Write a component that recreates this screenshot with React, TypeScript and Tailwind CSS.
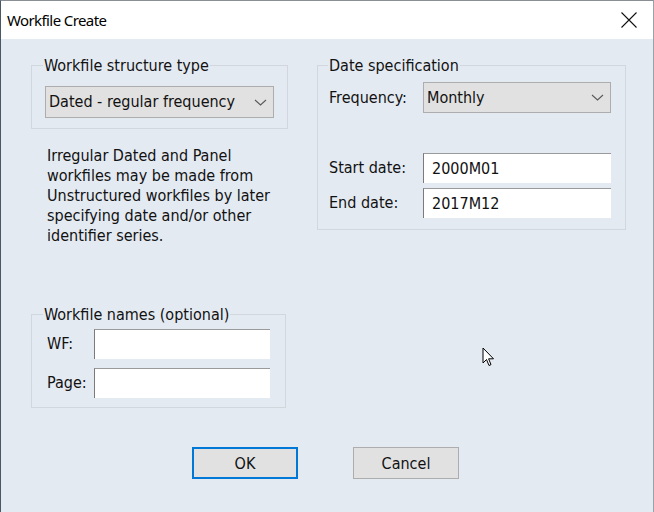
import React from 'react';

const Chevron = () => (
  <svg width="13" height="7" viewBox="0 0 13 7" fill="none">
    <path d="M1 1 L6.5 6 L12 1" stroke="#5a5a5a" strokeWidth="1.1" />
  </svg>
);

const Dropdown = ({ value, className }: { value: string; className: string }) => (
  <div className={`flex items-center justify-between border border-[#adadad] bg-[#e1e1e1] pl-[3px] pr-[6px] ${className}`}>
    <span>{value}</span>
    <Chevron />
  </div>
);

const Field = ({ value, className }: { value?: string; className: string }) => (
  <div className={`flex items-center bg-white border-t border-l border-t-[#9a9a9a] border-l-[#7a7a7a] pl-[8px] ${className}`}>
    {value}
  </div>
);

export default function App() {
  return (
    <div className="relative w-[654px] h-[512px] bg-[#e4eaf2] border-l border-t border-r border-l-[#4c5764] border-t-[#8a8f96] border-r-[#9aa1a9] text-[#111] font-['DejaVu_Sans_Condensed','DejaVu_Sans',sans-serif] text-[16px] leading-[18px]">
      {/* title bar */}
      <div className="h-[38px] bg-white flex items-center justify-between pl-[6px] pr-[16px]">
        <span className="font-['Noto_Sans',sans-serif] text-[15px] tracking-[-0.6px] text-black">Workfile Create</span>
        <svg width="16" height="16" viewBox="0 0 16 16">
          <path d="M0.5 0.5 L15.5 15.5 M15.5 0.5 L0.5 15.5" stroke="#111" strokeWidth="1.1" />
        </svg>
      </div>

      <div className="flex items-start mt-[17px]">
        {/* left column */}
        <div className="ml-[30px] w-[255px] flex flex-col">
          <fieldset className="border border-[#d2d7dd] px-[13px] pt-[12px] pb-[10px]">
            <legend className="-ml-[2px] px-[1px] relative top-[1px]">Workfile structure type</legend>
            <Dropdown value="Dated - regular frequency" className="h-[32px] w-[229px]" />
          </fieldset>

          <p className="mt-[17px] pl-[16px] leading-[20px]">
            Irregular Dated and Panel<br />
            workfiles may be made from<br />
            Unstructured workfiles by later<br />
            specifying date and/or other<br />
            identifier series.
          </p>

          <fieldset className="mt-[59px] border border-[#d2d7dd] pl-[15px] pr-[15px] pt-[6px] pb-[9px]">
            <legend className="-ml-[4px] px-[1px] relative top-[1px]">Workfile names (optional)</legend>
            <div className="flex flex-col gap-[9px]">
              <div className="flex items-center">
                <span className="w-[47px]">WF:</span>
                <Field className="h-[30px] w-[176px]" />
              </div>
              <div className="flex items-center">
                <span className="w-[47px]">Page:</span>
                <Field className="h-[30px] w-[176px]" />
              </div>
            </div>
          </fieldset>
        </div>

        {/* right column */}
        <fieldset className="ml-[31px] w-[309px] border border-[#d2d7dd] pl-[11px] pr-[13px] pt-[8px] pb-[11px]">
          <legend className="-ml-[1px] px-[1px] relative top-[1px]">Date specification</legend>
          <div className="flex items-center">
            <span className="w-[94px]">Frequency:</span>
            <Dropdown value="Monthly" className="h-[31px] w-[188px]" />
          </div>
          <div className="flex items-center mt-[40px]">
            <span className="w-[94px]">Start date:</span>
            <Field value="2000M01" className="h-[30px] w-[188px]" />
          </div>
          <div className="flex items-center mt-[5px]">
            <span className="w-[94px]">End date:</span>
            <Field value="2017M12" className="h-[30px] w-[188px]" />
          </div>
        </fieldset>
      </div>

      {/* buttons */}
      <div className="flex mt-[39px] pl-[191px] gap-[55px]">
        <button className="w-[106px] h-[32px] pt-[2px] bg-[#e1e1e1] border-2 border-[#0078d7]">OK</button>
        <button className="w-[106px] h-[32px] pt-[2px] bg-[#e1e1e1] border border-[#adadad]">Cancel</button>
      </div>

      {/* mouse pointer */}
      <svg className="absolute left-[481px] top-[346px]" width="14" height="21" viewBox="0 0 14 21">
        <path d="M1 1 L1 16 L4.5 12.5 L7 18.5 L9 17.6 L6.6 11.8 L11.5 11.8 Z" fill="#fff" stroke="#000" strokeWidth="1" strokeLinejoin="miter" />
      </svg>
    </div>
  );
}
